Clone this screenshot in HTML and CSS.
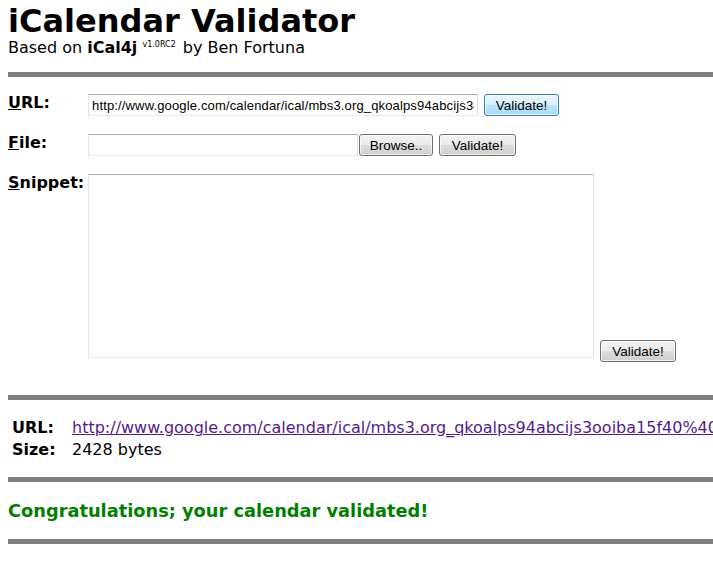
FILE: index.html
```html
<!DOCTYPE html>
<html lang="en">
<head>
<meta charset="utf-8">
<title>iCalendar Validator</title>
<link rel="stylesheet" href="styles.css">
</head>
<body>
<header class="head">
  <h1 class="title">iCalendar Validator</h1>
  <p class="subtitle">Based on <b>iCal4j</b> <sup class="ver">v1.0RC2</sup> by Ben Fortuna</p>
</header>
<div class="rule rule-top"></div>
<form class="form">
  <label class="lbl" for="url"><span class="key">U</span>RL:</label>
  <div class="field">
    <input id="url" class="text url-input" type="text" value="http://www.google.com/calendar/ical/mbs3.org_qkoalps94abcijs3ooiba15f40%40group.calendar.google.com/public/basic.ics">
    <button type="button" class="btn btn-hot btn-v1">Validate!</button>
  </div>
  <label class="lbl" for="file"><span class="key">F</span>ile:</label>
  <div class="field">
    <input id="file" class="text file-input" type="text" value="">
    <button type="button" class="btn btn-browse">Browse..</button>
    <button type="button" class="btn btn-v2">Validate!</button>
  </div>
  <label class="lbl" for="snippet"><span class="key">S</span>nippet:</label>
  <div class="field field-bottom">
    <textarea id="snippet" class="area"></textarea>
    <button type="button" class="btn btn-v3">Validate!</button>
  </div>
</form>
<div class="rule rule-mid"></div>
<div class="result">
  <span class="rlbl">URL:</span>
  <a class="rlink" href="#">http://www.google.com/calendar/ical/mbs3.org_qkoalps94abcijs3ooiba15f40%40group.calendar.google.com/public/basic.ics</a>
  <span class="rlbl">Size:</span>
  <span class="rval">2428 bytes</span>
</div>
<div class="rule rule-res"></div>
<h3 class="ok">Congratulations; your calendar validated!</h3>
<div class="rule rule-end"></div>
</body>
</html>
```
FILE: styles.css
```css
html {
  overflow: hidden;
  background: #fff;
}
body {
  margin: 5px 0 0 8px;
  font-family: "DejaVu Sans", Verdana, sans-serif;
  color: #000;
  font-size: 16px;
}
.title {
  margin: 0;
  font-size: 32px;
  line-height: 33px;
  font-weight: bold;
}
.subtitle {
  margin: 0;
  font-size: 16px;
  line-height: 19px;
}
.ver {
  font-size: 8px;
  line-height: 0;
  vertical-align: 6px;
  margin-right: 2px;
}
.rule {
  height: 5px;
  background: #808080;
}
.rule-top { margin-top: 15px; }
.rule-mid { margin-top: 33px; }
.rule-res { margin-top: 16px; }
.rule-end { margin-top: 17px; }

.form {
  margin-top: 17px;
  display: grid;
  grid-template-columns: 80px auto;
  row-gap: 18px;
  align-items: start;
}
.lbl {
  font-weight: bold;
  font-size: 16px;
  line-height: 19px;
  margin-top: -1px;
}
.key {
  text-decoration: underline;
}
.field {
  display: flex;
  align-items: center;
}
.field-bottom {
  align-items: flex-end;
}
.text, .area {
  box-sizing: border-box;
  font-family: "Liberation Sans", Arial, sans-serif;
  font-size: 13px;
  color: #000;
  border: 1px solid;
  border-color: #abadb3 #dbdfe6 #e3e9ef #e2e3ea;
  margin: 0;
  outline: none;
  background: #fff;
}
.text {
  height: 22px;
  padding: 0 3px;
}
.url-input {
  width: 390px;
  letter-spacing: 0.15px;
}
.file-input { width: 270px; }
.area {
  width: 506px;
  height: 184px;
  margin-bottom: 4px;
  resize: none;
  padding: 2px;
}
.btn {
  box-sizing: border-box;
  height: 22px;
  margin: 0;
  padding: 0;
  font-family: "Liberation Sans", Arial, sans-serif;
  font-size: 13.5px;
  color: #000;
  border: 1px solid #707070;
  border-radius: 3px;
  background: linear-gradient(#f2f2f2 0%, #ebebeb 50%, #dddddd 50%, #cfcfcf 100%);
  box-shadow: inset 0 0 0 1px rgba(255,255,255,0.7);
}
.btn-hot {
  border-color: #3c7fb1;
  background: linear-gradient(#eaf6fd 0%, #d9f0fc 50%, #bee6fd 50%, #a7d9f5 100%);
}
.btn-v1 { width: 75px; margin-left: 6px; }
.btn-browse { width: 74px; margin-left: 1px; }
.btn-v2 { width: 77px; margin-left: 6px; }
.btn-v3 { width: 76px; margin-left: 6px; }

.result {
  margin-top: 17px;
  padding-left: 4px;
  display: grid;
  grid-template-columns: 60px auto;
  line-height: 22px;
  white-space: nowrap;
}
.rlbl {
  font-weight: bold;
}
.rlink {
  color: #551a8b;
  text-decoration: underline;
}
.ok {
  margin: 18px 0 0;
  font-size: 17.8px;
  line-height: 22px;
  font-weight: bold;
  color: #008000;
}
```
